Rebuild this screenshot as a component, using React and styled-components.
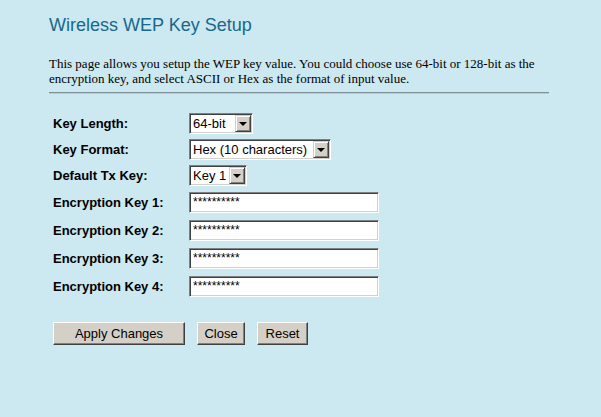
import React from "react";
import styled, { createGlobalStyle } from "styled-components";

const GlobalStyle = createGlobalStyle`
  html, body {
    margin: 0;
    padding: 0;
    background: #cce8f0;
  }
`;

const Page = styled.div`
  width: 601px;
  height: 417px;
  box-sizing: border-box;
  padding: 13px 0 0 49px;
  background: #cce8f0;
  font-family: "Liberation Sans", Arial, sans-serif;
`;

const Title = styled.h2`
  margin: 0;
  font-size: 18px;
  font-weight: normal;
  color: #17698c;
  line-height: 24px;
`;

const Intro = styled.p`
  margin: 19px 0 0;
  width: 500px;
  font-family: "Liberation Serif", "Times New Roman", serif;
  font-size: 13px;
  line-height: 15px;
  color: #000;
`;

const Rule = styled.hr`
  margin: 6px 0 0;
  width: 500px;
  border: 0;
  border-top: 1px solid #7f8f96;
  border-bottom: 1px solid #b8cdd4;
`;

const Form = styled.div`
  margin: 16px 0 0 4px;
  display: flex;
  flex-direction: column;
`;

const Row = styled.div`
  display: flex;
  align-items: center;
  height: ${(p) => p.$h}px;
`;

const Label = styled.div`
  width: 136px;
  font-size: 13px;
  font-weight: bold;
  color: #000;
`;

const SelectBox = styled.div`
  display: inline-flex;
  align-items: stretch;
  width: ${(p) => p.$w}px;
  height: 21px;
  box-sizing: border-box;
  background: #fff;
  border-top: 1px solid #808080;
  border-left: 1px solid #808080;
  border-right: 1px solid #ffffff;
  border-bottom: 1px solid #ffffff;
  box-shadow: inset 1px 1px 0 #404040, inset -1px -1px 0 #d4d0c8;
  padding: 1px;
`;

const SelectText = styled.select`
  flex: 1;
  min-width: 0;
  appearance: none;
  border: 0;
  outline: 0;
  margin: 0;
  padding: 0 0 0 2px;
  background: #fff;
  font-family: "Liberation Sans", Arial, sans-serif;
  font-size: 13px;
  color: #000;
`;

const Arrow = styled.span`
  width: 16px;
  box-sizing: border-box;
  background: #d4d0c8;
  border-top: 1px solid #d4d0c8;
  border-left: 1px solid #d4d0c8;
  border-right: 1px solid #404040;
  border-bottom: 1px solid #404040;
  box-shadow: inset 1px 1px 0 #fff, inset -1px -1px 0 #808080;
  display: flex;
  align-items: center;
  justify-content: center;
  &::after {
    content: "";
    border-left: 4px solid transparent;
    border-right: 4px solid transparent;
    border-top: 4px solid #000;
    margin-top: 1px;
  }
`;

const TextInput = styled.input`
  width: 190px;
  height: 21px;
  box-sizing: border-box;
  margin: 0;
  padding: 0 3px;
  background: #fff;
  border-top: 1px solid #808080;
  border-left: 1px solid #808080;
  border-right: 1px solid #ffffff;
  border-bottom: 1px solid #ffffff;
  box-shadow: inset 1px 1px 0 #404040, inset -1px -1px 0 #d4d0c8;
  outline: 0;
  font-family: "Liberation Sans", Arial, sans-serif;
  font-size: 12px;
  color: #000;
`;

const Buttons = styled.div`
  display: flex;
  gap: 12px;
  margin: 22px 0 0 4px;
`;

const Button = styled.button`
  width: ${(p) => p.$w}px;
  height: 23px;
  box-sizing: border-box;
  margin: 0;
  padding: 0;
  background: #d4d0c8;
  border-top: 1px solid #ffffff;
  border-left: 1px solid #ffffff;
  border-right: 1px solid #404040;
  border-bottom: 1px solid #404040;
  box-shadow: inset -1px -1px 0 #808080;
  font-family: "Liberation Sans", Arial, sans-serif;
  font-size: 13px;
  color: #000;
`;

function Select({ width, value, options }) {
  return (
    <SelectBox $w={width}>
      <SelectText defaultValue={value}>
        {options.map((o) => (
          <option key={o}>{o}</option>
        ))}
      </SelectText>
      <Arrow />
    </SelectBox>
  );
}

export default function App() {
  return (
    <Page>
      <GlobalStyle />
      <Title>Wireless WEP Key Setup</Title>
      <Intro>
        This page allows you setup the WEP key value. You could choose use
        64-bit or 128-bit as the encryption key, and select ASCII or Hex as the
        format of input value.
      </Intro>
      <Rule />
      <Form>
        <Row $h={26}>
          <Label>Key Length:</Label>
          <Select width={64} value="64-bit" options={["64-bit", "128-bit"]} />
        </Row>
        <Row $h={26}>
          <Label>Key Format:</Label>
          <Select
            width={142}
            value="Hex (10 characters)"
            options={["ASCII (5 characters)", "Hex (10 characters)"]}
          />
        </Row>
        <Row $h={26}>
          <Label>Default Tx Key:</Label>
          <Select
            width={58}
            value="Key 1"
            options={["Key 1", "Key 2", "Key 3", "Key 4"]}
          />
        </Row>
        {[1, 2, 3, 4].map((n) => (
          <Row $h={28} key={n}>
            <Label>Encryption Key {n}:</Label>
            <TextInput type="text" defaultValue="**********" />
          </Row>
        ))}
      </Form>
      <Buttons>
        <Button $w={132}>Apply Changes</Button>
        <Button $w={48}>Close</Button>
        <Button $w={51}>Reset</Button>
      </Buttons>
    </Page>
  );
}
